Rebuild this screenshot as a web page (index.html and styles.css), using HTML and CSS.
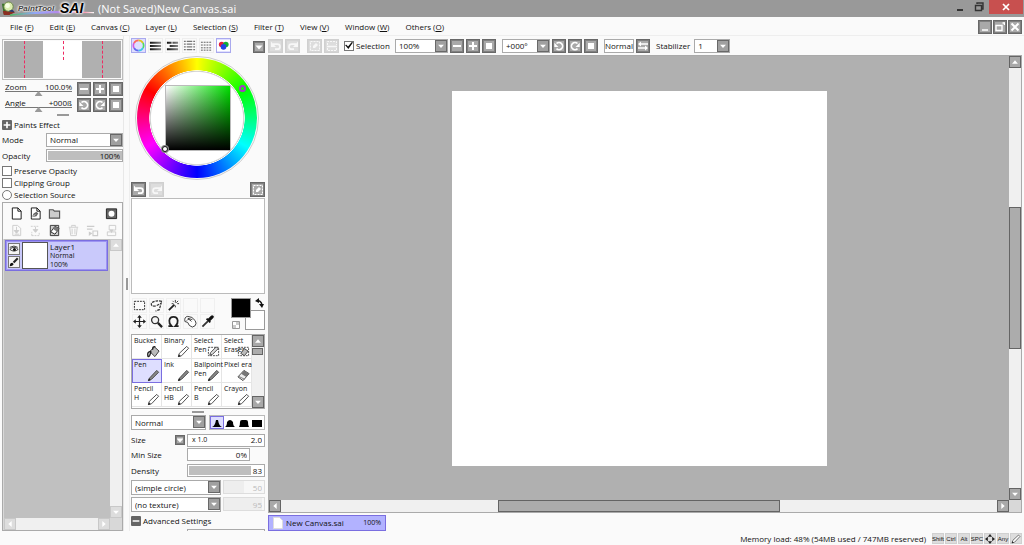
FILE: index.html
```html
<!DOCTYPE html>
<html lang="en">
<head>
<meta charset="utf-8">
<title>PaintTool SAI</title>
<link rel="stylesheet" href="styles.css">
</head>
<body>
<svg class="defs" aria-hidden="true">
  <defs>
    <symbol id="minus" viewBox="0 0 12 12"><path d="M2 6h8" stroke="currentColor" stroke-width="2"/></symbol>
    <symbol id="plus" viewBox="0 0 12 12"><path d="M2 6h8M6 2v8" stroke="currentColor" stroke-width="2"/></symbol>
    <symbol id="fit" viewBox="0 0 12 12"><path d="M3 3h6v6H3z" fill="currentColor"/></symbol>
    <symbol id="ccw" viewBox="0 0 12 12"><path d="M3.500 3.500A3.600 3.600 0 1 1 3.500 8.700" fill="none" stroke="currentColor" stroke-width="1.700"/><path d="M1.300 2.700v4.300h4.200z" fill="currentColor"/></symbol>
    <symbol id="cw" viewBox="0 0 12 12"><path d="M8.500 3.500A3.600 3.600 0 1 0 8.500 8.700" fill="none" stroke="currentColor" stroke-width="1.700"/><path d="M10.700 2.700v4.300h-4.200z" fill="currentColor"/></symbol>
    <symbol id="undo" viewBox="0 0 12 12"><path d="M3 4.200h4.500a2.500 2.500 0 0 1 0 5H5" fill="none" stroke="currentColor" stroke-width="1.700"/><path d="M1 1.500v5.500h5z" fill="currentColor"/></symbol>
    <symbol id="redo" viewBox="0 0 12 12"><path d="M9 4.200H4.500a2.500 2.500 0 0 0 0 5H7" fill="none" stroke="currentColor" stroke-width="1.700"/><path d="M11 1.500v5.500H6z" fill="currentColor"/></symbol>
    <symbol id="deselect" viewBox="0 0 12 12"><path d="M1.500 1.500h9v9h-9z" fill="none" stroke="currentColor" stroke-dasharray="2 1"/><path d="M7 3l2 2-3 3H4V6z" fill="currentColor"/></symbol>
    <symbol id="invert" viewBox="0 0 12 12"><path d="M1.500 5V1.500h9V5M1.500 8v2.500h9V8" fill="none" stroke="currentColor" stroke-dasharray="2 1"/><path d="M1 6.500h10" stroke="currentColor" stroke-width="1.500"/></symbol>
    <symbol id="flip" viewBox="0 0 12 12"><path d="M2 4h9M1 8h9" stroke="currentColor" stroke-width="1.400"/><path d="M1 4l3-2.500v5zM11 8L8 5.500v5z" fill="currentColor"/></symbol>
    <symbol id="up" viewBox="0 0 12 12"><path d="M2.500 8L6 4l3.500 4z" fill="currentColor"/></symbol>
    <symbol id="down" viewBox="0 0 12 12"><path d="M2.500 4.500h7L6 8.500z" fill="currentColor"/></symbol>
    <symbol id="left" viewBox="0 0 12 12"><path d="M8 2.500v7L4 6z" fill="currentColor"/></symbol>
    <symbol id="right" viewBox="0 0 12 12"><path d="M4 2.500v7L8 6z" fill="currentColor"/></symbol>
    <symbol id="pencil" viewBox="0 0 14 14"><path d="M1.500 12.500l1-3.500L10.500 1.500l2 2L5 11.500z" fill="#fff" stroke="#444"/><path d="M1 13l1-3 2 2z" fill="#222"/></symbol>
    <symbol id="pen" viewBox="0 0 14 14"><path d="M1.500 12.500l1.500-3L10.500 1.500l2 2L5 11z" fill="#888" stroke="#444"/><path d="M1 13l1-3 2 2z" fill="#222"/></symbol>
    <symbol id="eraser" viewBox="0 0 14 14"><path d="M1 8.500L7.500 1.500 13 5 6.500 12.500z" fill="#eee" stroke="#444"/><path d="M4.500 5L10 8.500l3-3.500-5.500-3.500z" fill="#777"/><path d="M2 8l6 3" stroke="#777"/></symbol>
    <symbol id="bucket" viewBox="0 0 14 14"><path d="M3 7l5-5 5 4.500-4.500 6z" fill="#bbb" stroke="#333"/><path d="M4 7Q0 7 1 12q1 1 2-1l1-3zM6 5q0-4 3-3" fill="none" stroke="#222" stroke-width="1.500"/></symbol>
    <symbol id="selpen" viewBox="0 0 14 14"><path d="M1.500 2.500h11v9h-11z" fill="none" stroke="#444" stroke-dasharray="2 1"/><path d="M3 11l1-3 6-6 2 2-6 6z" fill="#ddd" stroke="#444"/></symbol>
    <symbol id="seleraser" viewBox="0 0 14 14"><path d="M1.500 2.500h11v9h-11z" fill="none" stroke="#444" stroke-dasharray="2 1"/><path d="M4 9l4-5 4 2.500-4 5z" fill="#bbb" stroke="#444"/></symbol>
    <symbol id="page" viewBox="0 0 14 14"><path d="M2.500 1h6L12 4.500V13H2.500z" fill="#fff" stroke="currentColor"/><path d="M8.500 1v3.500H12" fill="none" stroke="currentColor"/></symbol>
    <symbol id="penpage" viewBox="0 0 14 14"><path d="M2.500 1h6L12 4.500V13H2.500z" fill="#fff" stroke="currentColor"/><path d="M8.500 1v3.500H12" fill="none" stroke="currentColor"/><path d="M3 11l2-4 3-2 2 2-2 3z" fill="#666"/><path d="M3 11l4-3" stroke="#fff" stroke-width=".7"/></symbol>
    <symbol id="folder" viewBox="0 0 14 14"><path d="M1.500 12V3h4L7 4.500h5.500V12z" fill="#ccc" stroke="#555" stroke-width="1.200"/></symbol>
    <symbol id="mask" viewBox="0 0 14 14"><path d="M1.500 2h11v10.500h-11z" fill="#666" stroke="#222"/><circle cx="7" cy="7.200" r="3.200" fill="#fff"/></symbol>
    <symbol id="transfer" viewBox="0 0 14 14"><path d="M3 1.500h5l3.500 3v8H3z" fill="none" stroke="currentColor"/><path d="M7 3v6M4.500 7L7 10l2.500-3zM5 11h5" fill="currentColor" stroke="currentColor"/></symbol>
    <symbol id="merge" viewBox="0 0 14 14"><path d="M2 2.500h8M3 12.500h8v-4M3 12.500v-4" stroke-dasharray="2 1" fill="none" stroke="currentColor"/><path d="M7 3v5M4.500 6L7 9l2.500-3z" fill="currentColor" stroke="currentColor"/></symbol>
    <symbol id="clear" viewBox="0 0 14 14"><path d="M2.500 1.500h9v11h-9z" fill="#ccc" stroke="#333"/><path d="M3 8.500l4.500-6L12 5l-4.500 6z" fill="#fff" stroke="#222"/><path d="M5.500 5.500l4 2.500L12 5 7.500 2.500z" fill="#777"/></symbol>
    <symbol id="trash" viewBox="0 0 14 14"><path d="M2 3.500h10M5 3V1.500h4V3M3 4l1 8.500h6L11 4M5.500 5v6M8.500 5v6" fill="none" stroke="currentColor"/></symbol>
    <symbol id="apply" viewBox="0 0 14 14"><path d="M1 2.500h8M1 5.500h6M7.500 7.500h5v5h-5z" fill="none" stroke="currentColor" stroke-width="1.200"/><path d="M3 8l4 2-4 3z" fill="currentColor"/></symbol>
    <symbol id="maskdown" viewBox="0 0 14 14"><path d="M4.500 1.500h7v5h-7zM2.500 8.500h9v4h-9z" fill="none" stroke="currentColor"/><path d="M5 6h4l-2 4z" fill="currentColor"/></symbol>
    <symbol id="eye" viewBox="0 0 12 12"><path d="M1 6.500q5-5 10 0-5 4-10 0z" fill="#fff" stroke="#222"/><circle cx="6.500" cy="6.500" r="1.800" fill="#111"/><path d="M1 4q5-3 9.500 0" stroke="#222" fill="none"/></symbol>
    <symbol id="brush" viewBox="0 0 12 12"><path d="M10.500 1.500l-5 5" stroke="#222" stroke-width="2.500"/><path d="M1 11q0-4 3-4l1.500 1.500Q5 11 1 11z" fill="#111"/></symbol>
    <symbol id="move" viewBox="0 0 14 14"><path d="M7 2v10M2 7h10" stroke="#222" stroke-width="1.300"/><path d="M7 0l2.500 3h-5zM7 14l2.500-3h-5zM0 7l3-2.500v5zM14 7l-3-2.500v5z" fill="#222"/></symbol>
    <symbol id="spread" viewBox="0 0 14 14"><path d="M7 0l3 4H4zM7 14l3-4H4zM0 7l4-3v6zM14 7l-4-3v6z" fill="#222"/></symbol>
  </defs>
</svg>

<header class="titlebar">
  <div class="logo">
    <svg class="logo-icon" viewBox="0 0 16 16" aria-hidden="true"><path d="M1 3h9v11H3z" fill="#347326"/><path d="M2 11l9-2 4 3-6 3H3z" fill="#8b2f22"/><circle cx="8" cy="6" r="5" fill="#dcedaf" stroke="#648044"/><circle cx="7" cy="5" r="2.500" fill="#f7ffe4"/><path d="M8 11q5-4 6 1z" fill="#283e77"/></svg>
    <span class="logo-small">PaintTool</span>
    <strong class="logo-big">SAI</strong>
    <svg class="swoosh" viewBox="0 0 84 6" preserveAspectRatio="none" aria-hidden="true"><defs><linearGradient id="rainbow"><stop stop-color="#49b95c"/><stop offset=".3" stop-color="#93a7ff"/><stop offset=".6" stop-color="#b986ed"/><stop offset=".85" stop-color="#ff7b99"/><stop offset="1" stop-color="#fff"/></linearGradient></defs><path d="M0 5Q35-2 84 2 38 1 0 5z" fill="url(#rainbow)" stroke="url(#rainbow)"/></svg>
  </div>
  <h1>(Not Saved)New Canvas.sai</h1>
  <div class="window-controls">
    <button aria-label="Minimize"><svg viewBox="0 0 12 12"><path d="M3 9h6" stroke="#333" stroke-width="2"/></svg></button>
    <button aria-label="Restore"><svg viewBox="0 0 12 12"><path d="M4 3V2h6v6H9M2.500 4.500h6v5h-6z" fill="none" stroke="#333" stroke-width="1.400"/></svg></button>
    <button class="close" aria-label="Close"><svg viewBox="0 0 12 12"><path d="M3 3l6 6m0-6l-6 6" stroke="#fff" stroke-width="1.700"/></svg></button>
  </div>
</header>

<nav class="menubar" aria-label="Main menu">
  <button>File (<u>F</u>)</button><button>Edit (<u>E</u>)</button><button>Canvas (<u>C</u>)</button><button>Layer (<u>L</u>)</button><button>Selection (<u>S</u>)</button><button>Filter (<u>T</u>)</button><button>View (<u>V</u>)</button><button>Window (<u>W</u>)</button><button>Others (<u>O</u>)</button>
  <div class="doc-controls">
    <button class="sq" aria-label="Minimize document"><svg viewBox="0 0 12 12"><path d="M3 9h6" stroke="#fff" stroke-width="1.500"/></svg></button>
    <button class="sq" aria-label="Restore document"><svg viewBox="0 0 12 12"><path d="M2 4.500h6v5H2zM8.500 2h2v2" fill="none" stroke="#fff" stroke-width="1.400"/></svg></button>
    <button class="sq" aria-label="Close document"><svg viewBox="0 0 12 12"><path d="M2.500 2.500l7 7m0-7l-7 7" stroke="#fff" stroke-width="2"/></svg></button>
  </div>
</nav>

<main class="workspace">
  <aside class="layers-panel" aria-label="Layers">
    <div class="navigator"><i></i><i class="paper"></i><i></i></div>
    <div class="nav-rows">
      <div class="slider"><label for="zoom">Zoom</label><output>100.0%</output><input id="zoom" type="range" value="50"></div>
      <button class="sq" aria-label="Zoom out"><svg><use href="#minus"/></svg></button><button class="sq" aria-label="Zoom in"><svg><use href="#plus"/></svg></button><button class="sq" aria-label="Reset zoom"><svg><use href="#fit"/></svg></button>
      <div class="slider"><label for="angle">Angle</label><output>+000ß</output><input id="angle" type="range" value="50"></div>
      <button class="sq" aria-label="Rotate left"><svg><use href="#ccw"/></svg></button><button class="sq" aria-label="Rotate right"><svg><use href="#cw"/></svg></button><button class="sq" aria-label="Reset angle"><svg><use href="#fit"/></svg></button>
    </div>
    <div class="splitter"></div>
    <button class="expander"><svg><use href="#plus"/></svg>Paints Effect</button>
    <div class="field-row"><label for="mode">Mode</label><span class="select"><select id="mode"><option>Normal</option></select><svg class="arrow"><use href="#down"/></svg></span></div>
    <div class="field-row opacity"><label for="opacity">Opacity</label><input id="opacity" class="num" value="100%" style="--fill:100%"></div>
    <div class="checks">
      <label><input type="checkbox">Preserve Opacity</label>
      <label><input type="checkbox">Clipping Group</label>
      <label><input type="radio">Selection Source</label>
    </div>
    <section class="layer-box">
      <div class="layer-tools">
        <button aria-label="New layer"><svg><use href="#page"/></svg></button><button aria-label="New linework layer"><svg><use href="#penpage"/></svg></button><button aria-label="New folder"><svg><use href="#folder"/></svg></button><span></span><span></span><button aria-label="Layer mask"><svg><use href="#mask"/></svg></button>
        <button disabled aria-label="Transfer down"><svg><use href="#transfer"/></svg></button><button disabled aria-label="Merge down"><svg><use href="#merge"/></svg></button><button aria-label="Clear layer"><svg><use href="#clear"/></svg></button><button disabled aria-label="Delete layer"><svg><use href="#trash"/></svg></button><button disabled aria-label="Apply mask"><svg><use href="#apply"/></svg></button><button disabled aria-label="Mask down"><svg><use href="#maskdown"/></svg></button>
      </div>
      <div class="layer-view">
        <div class="layer-list">
          <div class="layer">
            <div class="layer-flags"><button aria-label="Visible"><svg><use href="#eye"/></svg></button><button aria-label="Paint"><svg><use href="#brush"/></svg></button></div>
            <div class="thumb"></div>
            <div class="layer-info"><b>Layer1</b><span>Normal</span><span>100%</span></div>
          </div>
        </div>
        <div class="vbar faint"><button aria-label="Scroll up"><svg><use href="#up"/></svg></button><button aria-label="Scroll down"><svg><use href="#down"/></svg></button></div>
        <div class="hbar faint"><button aria-label="Scroll left"><svg><use href="#left"/></svg></button><button aria-label="Scroll right"><svg><use href="#right"/></svg></button></div>
      </div>
    </section>
  </aside>
  <div class="gutter"></div>

  <aside class="tools-panel" aria-label="Colors and tools">
    <div class="tabs">
      <button class="on" aria-label="Color wheel"><svg viewBox="0 0 14 14"><g fill="none" stroke-width="1.800"><path d="M7 1.500a5.500 5.500 0 0 1 4.800 2.800" stroke="#dfc51c"/><path d="M11.800 4.300a5.500 5.500 0 0 1 0 5.400" stroke="#4ddc62"/><path d="M11.800 9.700A5.500 5.500 0 0 1 7 12.500" stroke="#3bc7e9"/><path d="M7 12.500a5.500 5.500 0 0 1-4.800-2.800" stroke="#6169f0"/><path d="M2.200 9.700a5.500 5.500 0 0 1 0-5.400" stroke="#d15be5"/><path d="M2.200 4.300A5.500 5.500 0 0 1 7 1.500" stroke="#ff685b"/></g></svg></button>
      <button aria-label="RGB slider"><svg viewBox="0 0 14 14"><defs><linearGradient id="ink" gradientUnits="userSpaceOnUse" x1="1" y1="0" x2="13" y2="0"><stop stop-color="#111"/><stop offset="1" stop-color="#888"/></linearGradient></defs><path d="M1 3h12v2H1zM1 6.500h12v2H1zM1 10h12v2H1z" fill="url(#ink)"/></svg></button>
      <button aria-label="HSV slider"><svg viewBox="0 0 14 14"><path d="M1 3h5v2H1zM7 3h6v2H7zM4 6.500h9v2H4zM1 10h12v2H1z" fill="url(#ink)"/></svg></button>
      <button aria-label="Color mixer"><svg viewBox="0 0 14 14"><path d="M1 2.500h12M1 5.500h12M1 8.500h12M1 11.500h12" stroke="#777" stroke-width="1.200"/><path d="M3.500 1v12M10.500 1v12" stroke="#fff"/></svg></button>
      <button aria-label="Swatches"><svg viewBox="0 0 14 14"><path d="M1 3.500h12M1 6.500h12M1 9.500h12M1 12h12" stroke="#555" stroke-dasharray="2 1"/></svg></button>
      <button class="on" aria-label="Scratchpad"><svg viewBox="0 0 14 14"><path d="M0 1h14v12H0z" fill="#fff"/><circle cx="5" cy="6" r="3" fill="#e51d3c"/><circle cx="9.500" cy="6" r="3" fill="#13ad35"/><circle cx="7" cy="8.500" r="3" fill="#2444e5"/></svg></button>
      <button class="sq menu" aria-label="Color menu"><svg><use href="#down"/></svg></button>
    </div>
    <div class="wheel"><div class="hue"></div><div class="sv"></div><i class="hue-dot"></i><i class="sv-dot"></i></div>
    <div class="pad-tools"><button class="sq" aria-label="Undo scratch"><svg><use href="#undo"/></svg></button><button class="sq" disabled aria-label="Redo scratch"><svg><use href="#redo"/></svg></button><button class="sq" aria-label="Clear scratch"><svg><use href="#deselect"/></svg></button></div>
    <div class="scratch"></div>
    <div class="tool-area">
      <div class="tools">
        <button aria-label="Marquee"><svg viewBox="0 0 14 14"><path d="M1.500 2.500h11v9h-11z" fill="none" stroke="#222" stroke-dasharray="2 1"/></svg></button>
        <button aria-label="Lasso"><svg viewBox="0 0 14 14"><path d="M13 2.500Q5 1 1.500 4.500q-1 4 5 3l5.500-3-2 7-4 1.500" fill="none" stroke="#333" stroke-width="1.300" stroke-dasharray="3 1"/></svg></button>
        <button aria-label="Magic wand"><svg viewBox="0 0 14 14"><path d="M2 12l6-6" stroke="#222" stroke-width="2"/><path d="M9 1v3M9 7v2M5 5h2M11 5h2M6 2l1 1M12 2l-2 2" stroke="#333"/></svg></button><span></span><span></span>
        <button aria-label="Move"><svg><use href="#move"/></svg></button>
        <button aria-label="Zoom tool"><svg viewBox="0 0 14 14"><circle cx="5.500" cy="5.500" r="3.800" fill="#f4f4f4" stroke="#333" stroke-width="1.400"/><path d="M8.500 8.500L13 13" stroke="#222" stroke-width="2.500"/></svg></button>
        <button aria-label="Rotate tool"><svg viewBox="0 0 14 14"><path d="M1.500 12h3.500Q2 9 2.500 6 3 2 7 2t4.500 4Q12 9 9 12h3.500" fill="none" stroke="#222" stroke-width="1.900"/></svg></button>
        <button aria-label="Hand tool"><svg viewBox="0 0 14 14"><path d="M1 7Q0 2 4 1.500q5 0 8 4.500 2 3 0 5.500L9 13q-4-1-5-5L1 7zM3 6q2-3 5 1M4 3.500l5 1.500" fill="#fff" stroke="#333"/></svg></button>
        <button aria-label="Color picker"><svg viewBox="0 0 14 14"><path d="M9 5l3-3" stroke="#111" stroke-width="3.500" stroke-linecap="round"/><path d="M6 4l4 4" stroke="#111" stroke-width="2"/><path d="M1.500 12.500L7.500 6.500" stroke="#333" stroke-width="2"/></svg></button>
      </div>
      <div class="colors"><i class="back"></i><i class="front"></i><svg class="swap" viewBox="0 0 10 10"><path d="M2 3q4-1 5 4" fill="none" stroke="#111" stroke-width="1.500"/><path d="M0 3l4-3v5zM4 6h5l-2 4z" fill="#111"/></svg><svg class="transparent" viewBox="0 0 8 8"><path d="M.5.5h7v7h-7z" fill="#fff" stroke="#999"/><path d="M4 1h3v3H4zM1 4h3v3H1z" fill="#ccc"/></svg></div>
    </div>
    <div class="brush-box">
      <div class="brushes">
        <button>Bucket<svg><use href="#bucket"/></svg></button><button>Binary<svg><use href="#pencil"/></svg></button><button>Select<br>Pen<svg><use href="#selpen"/></svg></button><button>Select<br>Eraser<svg><use href="#seleraser"/></svg></button>
        <button class="on">Pen<svg><use href="#pen"/></svg></button><button>Ink<svg><use href="#pen"/></svg></button><button>Ballpoint<br>Pen<svg><use href="#pen"/></svg></button><button>Pixel era<svg><use href="#eraser"/></svg></button>
        <button>Pencil<br>H<svg><use href="#pencil"/></svg></button><button>Pencil<br>HB<svg><use href="#pencil"/></svg></button><button>Pencil<br>B<svg><use href="#pencil"/></svg></button><button>Crayon<svg><use href="#pencil"/></svg></button>
      </div>
      <div class="vbar"><button aria-label="Brushes up"><svg><use href="#up"/></svg></button><i class="grip"></i><button aria-label="Brushes down"><svg><use href="#down"/></svg></button></div>
    </div>
    <div class="splitter"></div>
    <div class="blend-row">
      <span class="select"><select aria-label="Brush blending"><option>Normal</option></select><svg class="arrow"><use href="#down"/></svg></span>
      <div class="shapes"><button class="on" aria-label="Sharp edge"><svg viewBox="0 0 12 10"><path d="M1 9q3-1 4-7h2q1 6 4 7z"/></svg></button><button aria-label="Soft edge"><svg viewBox="0 0 12 10"><path d="M1 9q2-1 2-5 3-4 6 0 0 4 2 5z"/></svg></button><button aria-label="Firm edge"><svg viewBox="0 0 12 10"><path d="M1 9q1-1 1-5 0-2 2-2h4q2 0 2 2 0 4 1 5z"/></svg></button><button aria-label="Hard edge"><svg viewBox="0 0 12 10"><path d="M1 2h10v7H1z"/></svg></button></div>
    </div>
    <div class="param size"><label for="size">Size</label><button class="sq small" aria-label="Size range"><svg><use href="#down"/></svg></button><span class="sizebox"><span>x 1.0</span><input id="size" value="2.0"></span></div>
    <div class="param min"><label for="min">Min Size</label><input id="min" class="num" value="0%" style="--fill:0%"></div>
    <div class="param density"><label for="density">Density</label><input id="density" class="num" value="83" style="--fill:83%"></div>
    <div class="texture"><span class="select"><select aria-label="Brush shape"><option>(simple circle)</option></select><svg class="arrow"><use href="#down"/></svg></span><input class="num" aria-label="Shape intensity" value="50" disabled style="--fill:50%"></div>
    <div class="texture"><span class="select"><select aria-label="Brush texture"><option>(no texture)</option></select><svg class="arrow"><use href="#down"/></svg></span><input class="num" aria-label="Texture intensity" value="95" disabled style="--fill:95%"></div>
    <button class="expander advanced"><svg><use href="#minus"/></svg>Advanced Settings</button>
    <div class="clipped"></div>
  </aside>

  <section class="document" aria-label="Canvas">
    <div class="toolbar">
      <button class="sq" disabled aria-label="Undo"><svg><use href="#undo"/></svg></button><button class="sq" disabled aria-label="Redo"><svg><use href="#redo"/></svg></button>
      <button class="sq group" disabled aria-label="Deselect"><svg><use href="#deselect"/></svg></button><button class="sq" disabled aria-label="Invert selection"><svg><use href="#invert"/></svg></button>
      <label class="check"><input type="checkbox" checked>Selection</label>
      <span class="select scale"><select aria-label="Zoom level"><option>100%</option></select><svg class="arrow"><use href="#down"/></svg></span>
      <button class="sq" aria-label="Zoom out"><svg><use href="#minus"/></svg></button><button class="sq" aria-label="Zoom in"><svg><use href="#plus"/></svg></button><button class="sq" aria-label="Reset zoom"><svg><use href="#fit"/></svg></button>
      <span class="select rotation"><select aria-label="Angle"><option>+000°</option></select><svg class="arrow"><use href="#down"/></svg></span>
      <button class="sq" aria-label="Rotate left"><svg><use href="#ccw"/></svg></button><button class="sq" aria-label="Rotate right"><svg><use href="#cw"/></svg></button><button class="sq" aria-label="Reset angle"><svg><use href="#fit"/></svg></button>
      <button class="normal">Normal</button><button class="sq" aria-label="Flip view"><svg><use href="#flip"/></svg></button>
      <label class="stab" for="stab">Stabilizer</label><span class="select level"><select id="stab"><option>1</option></select><svg class="arrow"><use href="#down"/></svg></span>
    </div>
    <div class="frame">
      <div class="viewport"><div class="canvas"></div></div>
      <div class="vbar"><button aria-label="Scroll up"><svg><use href="#up"/></svg></button><i class="grip"></i><button aria-label="Scroll down"><svg><use href="#down"/></svg></button></div>
      <div class="hbar"><button aria-label="Scroll left"><svg><use href="#left"/></svg></button><i class="grip"></i><button aria-label="Scroll right"><svg><use href="#right"/></svg></button></div>
    </div>
    <button class="doc-tab"><svg viewBox="0 0 10 12"><path d="M.5.5h6l3 3v8h-9z" fill="#fff" stroke="#ddd"/></svg><span>New Canvas.sai</span><small>100%</small></button>
  </section>
</main>

<footer class="status"><span>Memory load: 48% (54MB used / 747MB reserved)</span><kbd>Shift</kbd><kbd>Ctrl</kbd><kbd>Alt</kbd><kbd>SPC</kbd><kbd><svg><use href="#spread"/></svg></kbd><kbd>Any</kbd><kbd><svg><use href="#pencil"/></svg></kbd></footer>
</body>
</html>
```
FILE: styles.css
```css
* { box-sizing: border-box; }
body { margin: 0; height: 100vh; display: flex; flex-direction: column; overflow: hidden; background: #fafafa; color: #111; font: 8px/12px "Open Sans", "Noto Sans", sans-serif; }
button, input, select { font: inherit; color: inherit; margin: 0; padding: 0; border: 0; background: none; border-radius: 0; min-width: 0; }
button { display: flex; align-items: center; justify-content: center; white-space: nowrap; }
input, select { appearance: none; outline: 0; }
svg { display: block; flex: none; width: 12px; height: 12px; }
.defs { position: absolute; width: 0; height: 0; }
label { white-space: nowrap; }

.titlebar { height: 17px; flex: none; background: #999; display: flex; align-items: center; }
.logo { position: relative; width: 96px; height: 17px; display: flex; align-items: center; padding-left: 1px; }
.logo-icon { width: 15px; height: 15px; }
.logo-small { font: italic bold 8px/12px "Liberation Sans", sans-serif; color: #444; margin-left: 2px; width: 42px; text-shadow: 0 0 2px #fff, 0 0 2px #fff, 0 0 3px #fff; }
.logo-big { font: italic bold 14px/15px "Liberation Sans", sans-serif; color: #000; text-shadow: 0 0 2px #fff, 0 0 2px #fff, 0 0 3px #fff, 0 0 3px #fff; z-index: 1; }
.swoosh { position: absolute; left: 10px; bottom: 1px; width: 84px; height: 5px; }
h1 { margin: 0 auto 0 2px; font: 11px/16px "Open Sans", sans-serif; color: #fff; }
.window-controls { display: flex; align-self: flex-start; margin-right: 1px; }
.window-controls button { width: 19px; height: 14px; }
.window-controls .close { width: 34px; background: #c8504f; margin-left: 1px; }

.menubar { height: 19px; flex: none; border-bottom: 1px solid #eee; display: flex; align-items: center; padding: 1px 2px 0 10px; gap: 16px; }
.doc-controls { margin-left: auto; display: flex; gap: 1px; }

.sq { flex: none; width: 14px; height: 14px; background: #a9a9a9; border: 1px solid #686868; outline: 1px solid #808080; outline-offset: -2px; color: #fff; }
.sq:disabled { background: #ddd; border-color: #d0d0d0; outline-color: #d4d4d4; color: #f7f7f7; }

.workspace { flex: 1; min-height: 0; display: flex; margin-bottom: 1px; }
.layers-panel { width: 124px; flex: none; padding: 3px 0 0 2px; display: flex; flex-direction: column; border-right: 1px solid #e8e8e8; }
.navigator { height: 41px; flex: none; border: 1px solid #bbb; padding: 1px; display: flex; }
.navigator i { flex: 1; background: #b0b0b0; position: relative; }
.navigator i.paper { background: #fff; }
.navigator i::after { content: ""; position: absolute; left: 50%; top: 0; height: 100%; border-left: 1px dashed #ee2a62; }
.navigator i.paper::after { height: 50%; }
.nav-rows { display: grid; grid-template-columns: 1fr 14px 14px 14px; gap: 2px; padding: 2px 0 0 3px; }
.slider { display: grid; grid-template-columns: 1fr auto; line-height: 9px; margin-right: 3px; }
.slider input { grid-column: 1 / 3; width: 100%; height: 5px; background: linear-gradient(#777, #777) top / 100% 1px no-repeat; }
.slider input::-webkit-slider-thumb { appearance: none; width: 8px; height: 5px; background: #999; clip-path: polygon(50% 0, 100% 100%, 0 100%); }
.splitter { flex: none; width: 12px; height: 2px; background: #999; margin: 2px auto 3px; }
.expander { flex: none; height: 12px; gap: 2px; justify-content: flex-start; }
.expander svg { width: 10px; height: 10px; background: #666; color: #fff; border-radius: 1px; }
.layers-panel .expander { margin-bottom: 2px; }
.field-row { display: grid; grid-template-columns: 44px 1fr; align-items: center; flex: none; height: 14px; }
.field-row.opacity { height: 13px; margin-top: 2px; }
.select { position: relative; height: 14px; display: block; border: 1px solid #aaa; background: #fff; }
.select select { width: 100%; height: 100%; padding: 0 14px 0 3px; display: block; line-height: 12px; }
.arrow { position: absolute; right: 0; top: 0; width: 12px; height: 12px; background: #a0a0a0; border: 1px solid #686868; color: #fff; pointer-events: none; }
.num { width: 100%; height: 13px; border: 1px solid #aaa; text-align: right; padding: 0 2px; background: linear-gradient(#bebebe, #bebebe) 1px 1px / calc(var(--fill) - 1px) 9px no-repeat #fff; }
.num:disabled { color: #bbb; border-color: #ddd; background: linear-gradient(90deg, #eee var(--fill), #f7f7f7 0); }
.checks { margin-top: 3px; display: flex; flex-direction: column; }
.checks label, .check { display: flex; align-items: center; gap: 2px; height: 12px; }
input[type=checkbox], input[type=radio] { width: 10px; height: 10px; border: 1px solid #777; background: #fff; }
input[type=radio] { border-radius: 50%; }
input[type=checkbox]:checked::after { content: ""; display: block; width: 8px; height: 8px; background: #111; clip-path: polygon(0 45%, 18% 40%, 38% 62%, 85% 5%, 100% 12%, 42% 95%); }

.layer-box { flex: 1; min-height: 0; margin-top: 1px; border: 1px solid #aaa; display: flex; flex-direction: column; }
.layer-tools { display: grid; grid-template-columns: repeat(6, 19px); row-gap: 3px; padding: 3px 0 2px 3px; }
.layer-tools button { height: 14px; width: 20px; }
.layer-tools svg { width: 13px; height: 13px; }
.layer-tools button:disabled { color: #ccc; }
.layer-view { flex: 1; min-height: 0; display: grid; grid-template: 1fr 12px / 1fr 12px; padding: 0 0 0 1px; background: #d8d8d8; }
.layer-list { background: #c0c0c0; padding: 1px 2px 1px 1px; }
.layer { height: 31px; border: 1px solid #7a6ee0; outline: 1px solid #9d94f2; outline-offset: -2px; background: #c9c9fb; display: flex; align-items: center; padding: 0 2px; }
.layer-flags { display: grid; gap: 1px; }
.layer-flags button { width: 12px; height: 12px; background: #f4f4f4; border: 1px solid #777; }
.layer-flags svg { width: 10px; height: 10px; }
.thumb { width: 26px; height: 27px; background: #fff; border: 1px solid #555; margin: 0 2px; }
.layer-info { display: grid; line-height: 9px; }
.layer-info b { font-weight: 400; }
.layer-info span { font-size: 7px; }
.vbar, .hbar { display: flex; justify-content: space-between; background: #f0f0f0; }
.vbar { flex-direction: column; }
.vbar button, .hbar button { width: 12px; height: 12px; background: #a9a9a9; border: 1px solid #646464; color: #fff; }
.vbar button svg, .hbar button svg { width: 10px; height: 10px; }
.vbar.faint button, .hbar.faint button { background: #ddd; border-color: #c8c8c8; }
.grip { background: #acacac; border: 1px solid #646464; }

.gutter { width: 6px; flex: none; border-right: 1px solid #eee; display: flex; align-items: center; justify-content: center; }
.gutter::after { content: ""; width: 2px; height: 12px; background: #999; }

.tools-panel { width: 138px; flex: none; padding: 2px 3px 0 1px; display: flex; flex-direction: column; overflow: hidden; }
.tabs { display: flex; gap: 2px; height: 15px; flex: none; }
.tabs button:not(.menu) { width: 15px; height: 15px; border: 1px solid #eee; }
.tabs button:not(.menu) svg { width: 13px; height: 13px; }
.tabs .on:not(.menu) { border-color: #a9a9ee; background: #dedeff; }
.tabs .menu { width: 12px; height: 12px; margin: 3px 0 0 auto; }
.wheel { position: relative; width: 124px; height: 124px; flex: none; margin: 3px auto 2px 4px; border: 1px solid #ccc; border-radius: 50%; }
.hue { position: absolute; inset: 1px; border-radius: 50%; background: radial-gradient(closest-side, #fff 76%, #ccc 78%, #fff 79%, transparent 80%), conic-gradient(#ff0, #0f0 60deg, #0ff 120deg, #00f 180deg, #f0f 240deg, #f00 300deg, #ff0); }
.sv { position: absolute; left: 29px; top: 28px; width: 66px; height: 66px; border: 1px solid #bbb; background: linear-gradient(transparent, #000), linear-gradient(90deg, #fff, #00e000); }
.hue-dot, .sv-dot { position: absolute; width: 6px; height: 6px; border: 1px solid #a33ac4; border-radius: 50%; }
.hue-dot { left: 103px; top: 28px; width: 7px; height: 7px; border-width: 2px; }
.sv-dot { left: 26px; top: 89px; border-color: #111; background: #fff; box-shadow: 0 0 0 1px #888; }
.pad-tools { display: flex; gap: 3px; height: 15px; flex: none; }
.pad-tools .sq { width: 15px; height: 15px; }
.pad-tools .sq:last-child { margin-left: auto; }
.scratch { height: 96px; flex: none; margin-top: 1px; background: #fff; border: 1px solid #bbb; }
.tool-area { display: flex; justify-content: space-between; flex: none; margin-top: 4px; padding-left: 1px; }
.tools { display: grid; grid-template-columns: repeat(5, 15px); grid-auto-rows: 15px; gap: 1px 2px; }
.tools > * { border: 1px solid #f0f0f0; }
.tools svg { width: 13px; height: 13px; }
.colors { position: relative; width: 34px; height: 32px; }
.front, .back { position: absolute; width: 20px; height: 20px; border: 1px solid #999; }
.front { left: 0; top: 0; background: #000; }
.back { right: 0; bottom: 0; background: #fff; }
.swap { position: absolute; right: 0; top: 0; width: 10px; height: 10px; }
.transparent { position: absolute; left: 1px; bottom: 1px; width: 8px; height: 8px; }
.brush-box { height: 75px; flex: none; margin-top: 4px; border: 1px solid #aaa; display: flex; }
.brushes { flex: 1; display: grid; grid-template-columns: repeat(4, 30px); grid-auto-rows: 24px; background: #fff; }
.brushes button { position: relative; border: 1px solid #e5e5e5; border-width: 0 1px 1px 0; align-items: flex-start; justify-content: flex-start; text-align: left; padding: 1px 0 0 2px; font-size: 7px; line-height: 9px; }
.brushes button.on { border: 1px solid #7a6ee0; background: #dedeff; padding: 0 0 0 1px; }
.brushes svg { position: absolute; right: 1px; bottom: 0; width: 13px; height: 13px; }
.brush-box .vbar { width: 13px; }
.brush-box .vbar button { width: 12px; }
.brush-box .grip { height: 7px; margin: 1px 1px auto 0; }
.tools-panel .splitter { margin: 2px auto; }
.blend-row { display: flex; justify-content: space-between; flex: none; }
.blend-row .select { width: 75px; height: 15px; }
.shapes { width: 56px; height: 15px; border: 1px solid #bbb; background: #fff; display: flex; }
.shapes button { flex: 1; border: 1px solid transparent; }
.shapes .on { border-color: #7a6ee0; background: #dedeff; }
.shapes svg { width: 12px; height: 10px; }
.param { display: flex; align-items: center; flex: none; }
.param label { flex: 1; }
.param .num { width: 78px; }
.param.size { height: 14px; margin-top: 3px; }
.small { width: 10px; height: 10px; margin-right: 2px; }
.sizebox { width: 78px; height: 13px; border: 1px solid #aaa; background: #fff; display: flex; align-items: center; padding: 0 2px 0 4px; }
.sizebox span { font-size: 7px; white-space: nowrap; }
.sizebox input { flex: 1; width: 0; text-align: right; }
.param.min { margin-top: 1px; }
.param.min .num { width: 63px; margin-right: 15px; }
.param.density { margin-top: 3px; }
.texture { display: flex; flex: none; gap: 2px; margin-top: 2px; }
.texture .select { width: 90px; height: 15px; flex: none; }
.density + .texture { margin-top: 3px; }
.texture .num { flex: 1; width: 0; height: 14px; }
.advanced { margin-top: 3px; }
.clipped { flex: none; height: 14px; margin: 2px 0 0 56px; border: 1px solid #aaa; }

.document { flex: 1; min-width: 0; display: flex; flex-direction: column; padding: 2px 2px 0 0; }
.toolbar { display: flex; align-items: center; gap: 2px; height: 15px; margin-bottom: 2px; flex: none; }
.toolbar .sq:disabled { width: 15px; }
.toolbar .group { margin-left: 5px; }
.check { width: 46px; margin: 0 3px; }
.select.scale { width: 53px; }
.select.rotation { width: 48px; margin-left: 4px; }
.normal { border: 1px solid #aaa; background: #fff; height: 14px; width: 30px; margin-left: 4px; }
.stab { margin: 0 2px 0 4px; }
.select.level { width: 36px; }
.frame { flex: 1; min-height: 0; border: 1px solid #aaa; display: grid; grid-template: 1fr 12px / 1fr 12px; background: #d8d8d8; }
.viewport { background: #b0b0b0; display: flex; align-items: center; justify-content: center; min-height: 0; overflow: hidden; }
.canvas { width: 375px; height: 375px; flex: none; background: #fff; }
.frame .vbar .grip { flex: 0 0 32%; margin: auto 0; }
.frame .hbar .grip { flex: 0 0 38%; }
.doc-tab { flex: none; width: 118px; height: 16px; margin-top: 2px; background: #b2b2ff; border: 1px solid #7a6ee0; justify-content: flex-start; padding: 0 4px; gap: 3px; }
.doc-tab svg { width: 10px; height: 12px; }
.doc-tab small { margin-left: auto; font-size: 7px; }

.status { height: 13px; flex: none; display: flex; align-items: center; justify-content: flex-end; gap: 1px; padding-right: 2px; }
.status span { margin-right: 5px; }
kbd { font: 6px/10px "Liberation Sans", sans-serif; width: 12px; height: 11px; background: #ddd; border: 1px solid #d0d0d0; display: flex; justify-content: center; align-items: center; white-space: nowrap; }
kbd svg { width: 10px; height: 10px; }
```
